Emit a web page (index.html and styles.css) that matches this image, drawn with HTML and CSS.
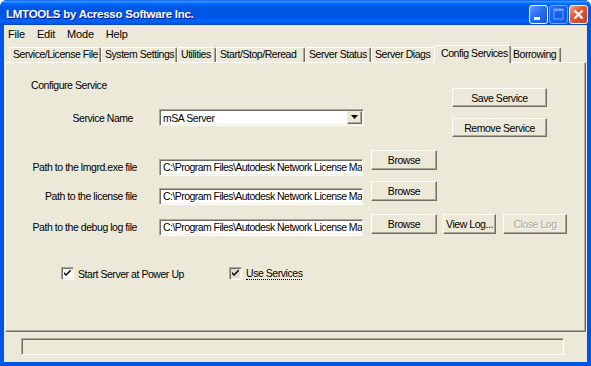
FILE: index.html
```html
<!DOCTYPE html>
<html>
<head>
  <title>LMTOOLS</title>
  <link rel="stylesheet" href="styles.css">
</head>
<body>
  <div class="window">
    <div class="titlebar">
      <span class="title">LMTOOLS by Acresso Software Inc.</span>
      <div class="caption-btns">
        <span class="cbtn">
          <svg width="17" height="17" viewBox="0 0 17 17"><rect x="4" y="11" width="6" height="3" fill="#fff"/></svg>
        </span>
        <span class="cbtn cbtn-off">
          <svg width="17" height="17" viewBox="0 0 17 17"><rect x="4" y="3" width="9" height="10" fill="none" stroke="#fff" stroke-width="1"/><rect x="4" y="3" width="9" height="2" fill="#fff"/></svg>
        </span>
        <span class="cbtn cbtn-close">
          <svg width="17" height="17" viewBox="0 0 17 17"><path d="M4.5 4.5 L12.5 12.5 M12.5 4.5 L4.5 12.5" stroke="#fff" stroke-width="2.2"/></svg>
        </span>
      </div>
    </div>

    <div class="client">
      <div class="menubar">
        <span class="menu-item">File</span>
        <span class="menu-item">Edit</span>
        <span class="menu-item">Mode</span>
        <span class="menu-item">Help</span>
      </div>

      <div class="tabs">
        <div class="tab">Service/License File</div>
        <div class="tab">System Settings</div>
        <div class="tab">Utilities</div>
        <div class="tab">Start/Stop/Reread</div>
        <div class="tab">Server Status</div>
        <div class="tab">Server Diags</div>
        <div class="tab active">Config Services</div>
        <div class="tab">Borrowing</div>
      </div>

      <div class="panel">
        <div class="top">
          <div class="top-left">
            <div class="group-title">Configure Service</div>
            <div class="service-row">
              <span class="lbl">Service Name</span>
              <div class="combo">
                <span class="combo-text">mSA Server</span>
                <span class="combo-btn">
                  <svg width="7" height="4" viewBox="0 0 7 4"><path d="M0 0 H7 L3.5 4 Z" fill="#000"/></svg>
                </span>
              </div>
            </div>
          </div>
          <div class="top-right">
            <button class="btn">Save Service</button>
            <button class="btn">Remove Service</button>
          </div>
        </div>

        <div class="paths">
          <div class="path-row row1">
            <span class="lbl">Path to the lmgrd.exe file</span>
            <div class="field">C:\Program Files\Autodesk Network License Ma</div>
            <button class="btn browse">Browse</button>
          </div>
          <div class="path-row row2">
            <span class="lbl">Path to the license file</span>
            <div class="field">C:\Program Files\Autodesk Network License Ma</div>
            <button class="btn browse">Browse</button>
          </div>
          <div class="path-row row3">
            <span class="lbl">Path to the debug log file</span>
            <div class="field">C:\Program Files\Autodesk Network License Ma</div>
            <button class="btn browse">Browse</button>
            <button class="btn view">View Log...</button>
            <button class="btn close" disabled>Close Log</button>
          </div>
        </div>

        <div class="checks">
          <div class="check">
            <span class="box"><svg width="7" height="7" viewBox="0 0 7 7"><path d="M0 2 L0 4 L2 6 L7 1 L7 -1 L2 4 Z" fill="#000"/></svg></span>
            <span>Start Server at Power Up</span>
          </div>
          <div class="check">
            <span class="box box-pressed"><svg width="7" height="7" viewBox="0 0 7 7"><path d="M0 2 L0 4 L2 6 L7 1 L7 -1 L2 4 Z" fill="#000"/></svg></span>
            <span class="focused">Use Services</span>
          </div>
        </div>
      </div>

      <div class="statusbar">
        <div class="status-field"></div>
      </div>
    </div>
  </div>
</body>
</html>
```

FILE: styles.css
```css
* {
  box-sizing: border-box;
}

body {
  margin: 0;
  font-family: "Liberation Sans", Arial, sans-serif;
  font-size: 10.5px;
  letter-spacing: -0.45px;
  color: #000;
  background: #fff;
}

.window {
  width: 591px;
  height: 366px;
  display: flex;
  flex-direction: column;
  background: #0055e5;
  border-radius: 7px 7px 0 0;
  overflow: hidden;
}

/* title bar */
.titlebar {
  height: 25px;
  flex: none;
  display: flex;
  align-items: center;
  padding: 0 3px 0 6px;
  background: linear-gradient(to bottom, #0058ee 0%, #3d95ff 6%, #1481ff 10%, #0367fb 16%, #0058e8 28%, #0054e3 50%, #0057ec 70%, #0063fa 84%, #0056e4 94%, #0045b8 100%);
}

.title {
  flex: 1;
  color: #fff;
  font-weight: bold;
  font-size: 11.5px;
  letter-spacing: -0.25px;
  text-shadow: 1px 1px #0a1883;
  margin-top: 2px;
}

.caption-btns {
  display: flex;
  gap: 1px;
  margin-top: 3px;
}

.cbtn {
  width: 19px;
  height: 19px;
  border: 1px solid #fff;
  border-radius: 3px;
  background: linear-gradient(135deg, #5f9bff 0%, #2b6ef0 45%, #1a55d8 100%);
  display: flex;
  align-items: center;
  justify-content: center;
}

.cbtn-off {
  opacity: 0.45;
}

.cbtn-close {
  background: linear-gradient(135deg, #f0a58a 0%, #df5c34 40%, #c9431f 100%);
}

/* client area */
.client {
  flex: 1;
  margin: 0 4px 4px;
  background: #ece9d8;
  display: flex;
  flex-direction: column;
}

.menubar {
  height: 18px;
  flex: none;
  display: flex;
  align-items: center;
}

.menu-item {
  padding: 0 6px 0 4px;
  margin-right: 2px;
  font-size: 11px;
  letter-spacing: -0.2px;
}

/* tabs */
.tabs {
  height: 19px;
  flex: none;
  display: flex;
  align-items: flex-end;
  padding-left: 5px;
}

.tab {
  height: 15px;
  line-height: 13px;
  border-top: 1px solid #fff;
  border-left: 1px solid #fff;
  border-right: 1px solid #716f64;
  box-shadow: inset -1px 0 #aca899;
  border-radius: 2px 2px 0 0;
  padding-left: 3px;
  white-space: nowrap;
  overflow: hidden;
}

.tab:nth-child(1) { width: 92px; }
.tab:nth-child(2) { width: 76px; }
.tab:nth-child(3) { width: 39px; }
.tab:nth-child(4) { width: 89px; }
.tab:nth-child(5) { width: 66px; }
.tab:nth-child(6) { width: 65px; }
.tab:nth-child(7) { width: 77px; }
.tab:nth-child(8) { width: 52px; }

.tab.active {
  height: 18px;
  line-height: 14px;
  margin: 0 -2px -1px;
  padding-left: 6px;
  background: #ece9d8;
  position: relative;
  z-index: 1;
}

/* panel */
.panel {
  height: 270px;
  flex: none;
  margin: 0 1px;
  border-top: 1px solid #fff;
  border-left: 1px solid #fff;
  border-right: 1px solid #716f64;
  border-bottom: 1px solid #716f64;
  box-shadow: inset -1px -1px #aca899;
}

.top {
  display: grid;
  grid-template-columns: 446px 95px;
}

.group-title {
  margin: 16px 0 0 25px;
  line-height: 12px;
}

.service-row {
  display: grid;
  grid-template-columns: 127px 205px;
  column-gap: 26px;
  align-items: center;
  margin-top: 18px;
}

.lbl {
  text-align: right;
  white-space: nowrap;
}

.top-right {
  display: flex;
  flex-direction: column;
  gap: 11px;
  padding-top: 25px;
}

.top-right .btn {
  height: 19px;
}

/* buttons */
.btn {
  height: 20px;
  padding: 0;
  font: inherit;
  letter-spacing: inherit;
  white-space: nowrap;
  color: #000;
  background: #ece9d8;
  border-top: 1px solid #fff;
  border-left: 1px solid #fff;
  border-right: 1px solid #716f64;
  border-bottom: 1px solid #716f64;
  box-shadow: inset -1px -1px #aca899;
  border-radius: 0;
}

.btn:disabled {
  color: #aca899;
  text-shadow: 1px 1px #fff;
}

/* sunken controls */
.combo,
.field {
  height: 17px;
  background: #fff;
  border-top: 1px solid #aca899;
  border-left: 1px solid #aca899;
  border-right: 1px solid #fff;
  border-bottom: 1px solid #fff;
  box-shadow: inset 1px 1px #716f64, inset -1px -1px #f1efe2;
}

.combo {
  display: flex;
  align-items: center;
  padding: 0 1px 0 3px;
}

.combo-text {
  flex: 1;
}

.combo-btn {
  width: 15px;
  height: 13px;
  margin-top: -1px;
  display: flex;
  align-items: center;
  justify-content: center;
  background: #ece9d8;
  border-top: 1px solid #f1efe2;
  border-left: 1px solid #f1efe2;
  border-right: 1px solid #716f64;
  border-bottom: 1px solid #716f64;
  box-shadow: inset -1px -1px #aca899;
}

.field {
  padding: 0 2px 0 3px;
  line-height: 14px;
  letter-spacing: -0.55px;
  white-space: nowrap;
  overflow: hidden;
}

/* path rows: label | field | Browse | View Log | Close Log */
.paths {
  margin-top: 13px;
}

.path-row {
  display: grid;
  grid-template-columns: 153px 212px 72px 60px 64px;
  align-items: start;
}

.path-row .lbl {
  padding-right: 22px;
  line-height: 17px;
}

.path-row .field {
  width: 204px;
}

.path-row .browse {
  width: 66px;
}

.path-row .view {
  width: 53px;
}

.path-row .close {
  width: 64px;
}

.path-row .lbl,
.path-row .field {
  margin-top: var(--drop);
}

.path-row.row1 { --drop: 9px; }
.path-row.row2 { --drop: 7px; margin-top: 5px; }
.path-row.row3 { --drop: 5px; margin-top: 9px; }

/* checkboxes */
.checks {
  display: flex;
  margin: 31px 0 0 55px;
}

.check {
  display: flex;
  align-items: center;
  gap: 4px;
}

.check:first-child {
  width: 168px;
}

.box {
  width: 13px;
  height: 13px;
  background: #fff;
  border-top: 1px solid #aca899;
  border-left: 1px solid #aca899;
  border-right: 1px solid #fff;
  border-bottom: 1px solid #fff;
  box-shadow: inset 1px 1px #716f64, inset -1px -1px #f1efe2;
  display: flex;
  align-items: center;
  justify-content: center;
}

.box-pressed {
  background: #e2dfd2;
}

.focused {
  border-bottom: 1px dotted #000;
  line-height: 12px;
}

/* status bar */
.statusbar {
  height: 30px;
  flex: none;
  padding: 6px 0 0 17px;
}

.status-field {
  width: 543px;
  height: 17px;
  border-top: 1px solid #aca899;
  border-left: 1px solid #aca899;
  border-right: 1px solid #fff;
  border-bottom: 1px solid #fff;
  box-shadow: inset 1px 1px #716f64;
}
```
